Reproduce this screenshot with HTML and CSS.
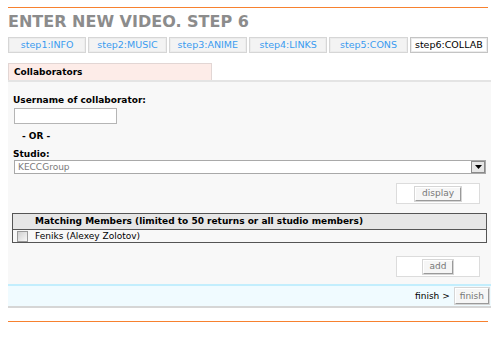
FILE: index.html
```html
<!DOCTYPE html>
<html>
<head>
<meta charset="utf-8">
<link rel="stylesheet" href="styles.css">
</head>
<body>
<div class="page">
  <div class="rule"></div>
  <h1 class="title">ENTER NEW VIDEO. STEP 6</h1>
  <div class="tabs">
    <a class="tab">step1:INFO</a>
    <a class="tab">step2:MUSIC</a>
    <a class="tab">step3:ANIME</a>
    <a class="tab">step4:LINKS</a>
    <a class="tab">step5:CONS</a>
    <a class="tab active">step6:COLLAB</a>
  </div>
  <div class="section-head">Collaborators</div>
  <div class="panel">
    <div class="label">Username of collaborator:</div>
    <input class="text-input" type="text">
    <div class="or">- OR -</div>
    <div class="label studio-label">Studio:</div>
    <div class="select">
      <span class="select-value">KECCGroup</span>
      <span class="select-arrow"><svg width="7" height="4" viewBox="0 0 7 4"><path d="M0 0h7L3.5 4z" fill="#000"/></svg></span>
    </div>
    <div class="btn-row">
      <div class="btn-box"><button class="btn">display</button></div>
    </div>
    <table class="members">
      <tr class="members-head"><th class="cb-col"></th><th class="name-col">Matching Members (limited to 50 returns or all studio members)</th></tr>
      <tr class="members-row"><td class="cb-col"><span class="checkbox"></span></td><td class="name-col">Feniks (Alexey Zolotov)</td></tr>
    </table>
    <div class="btn-row add-row">
      <div class="btn-box"><button class="btn btn-add">add</button></div>
    </div>
  </div>
  <div class="finish-bar">
    <span class="finish-text">finish &gt;</span>
    <button class="btn btn-finish">finish</button>
  </div>
  <div class="rule bottom-rule"></div>
</div>
</body>
</html>
```
FILE: styles.css
```css
html, body { margin: 0; padding: 0; background: #fff; }
body { font-family: "DejaVu Sans", Verdana, sans-serif; font-size: 10px; color: #000; }
.page { margin-left: 8px; width: 483px; padding-top: 7px; }
.rule { width: 480px; height: 1px; background: #f7812f; }
.title { margin: 4px 0 0 0; font-size: 16px; line-height: 20px; font-weight: bold; color: #8c8c8c; white-space: nowrap; }
.tabs { display: flex; gap: 2px; margin-top: 5px; width: 480px; }
.tab { flex: 1; height: 14px; line-height: 14px; border: 1px solid #d6d6d6; background: #f3f3f3; color: #3a9bf0; font-size: 9.5px; text-align: center; box-shadow: inset 0 0 0 1px #ececec; white-space: nowrap; }
.tab.active { background: #fff; color: #000; border-color: #c4c4c4; }
.section-head { margin-top: 10px; width: 197px; height: 16px; line-height: 16px; padding-left: 5px; background: #fdece8; border: 1px solid #e2d6d4; border-bottom: 0; font-weight: bold; font-size: 9px; }
.panel { background: #f8f8f8; border-top: 2px solid #e4e4e4; padding: 13px 5px 7px 5px; }
.label { font-weight: bold; font-size: 9px; line-height: 11px; }
.text-input { display: block; margin: 2px 0 0 1px; width: 103px; height: 16px; box-sizing: border-box; border: 1px solid #b5b5b5; background: #fff; padding: 0; }
.or { font-weight: bold; font-size: 9px; margin: 7px 0 0 9px; line-height: 11px; }
.studio-label { margin-top: 7px; }
.select { display: flex; align-items: center; justify-content: space-between; margin: 0 0 0 1px; width: 472px; height: 14px; box-sizing: border-box; border: 1px solid #a9a9a9; background: #fff; }
.select-value { color: #7a7a7a; font-size: 9px; padding-left: 3px; line-height: 12px; }
.select-arrow { display: flex; align-items: center; justify-content: center; width: 14px; height: 12px; margin-right: 0; background: #e6e6e6; border: 1px solid #8a8a8a; box-sizing: border-box; }
.btn-row { display: flex; justify-content: flex-end; margin-top: 9px; padding-right: 6px; }
.btn-box { width: 84px; height: 21px; box-sizing: border-box; border: 1px solid #dcdcdc; background: #fff; display: flex; justify-content: center; align-items: center; }
.btn { font-family: "DejaVu Sans", Verdana, sans-serif; font-size: 9px; color: #777; background: #f6f6f6; border: 1px solid; border-color: #fff #9a9a9a #9a9a9a #fff; box-shadow: 0 0 0 1px #d6d6d6; padding: 0 6px; height: 14px; line-height: 11px; margin: 0; }
.members { margin-top: 9px; margin-left: -1px; width: 475px; border-collapse: collapse; border: 1px solid #555; }
.members th, .members td { padding: 0; font-size: 9px; line-height: 11px; text-align: left; border-bottom: 1px solid #555; }
.members-head th { background: #e6e6e6; font-weight: bold; height: 15px; }
.members-row td { height: 12px; }
.cb-col { width: 22px; }
.name-col { padding-left: 1px; }
.checkbox { display: block; width: 9px; height: 9px; margin-left: 4px; border: 1px solid #9a9a9a; background: linear-gradient(135deg, #d0d0d0, #f8f8f8); }
.add-row { margin-top: 13px; }
.finish-bar { display: flex; justify-content: flex-end; align-items: center; gap: 5px; height: 20px; background: #f0fbff; border-top: 2px solid #c3eefd; border-bottom: 2px solid #d6d6d6; padding-right: 2px; }
.finish-text { font-size: 9px; }
.btn-finish { height: 16px; padding: 0 4px; }
.bottom-rule { margin-top: 13px; }
```
